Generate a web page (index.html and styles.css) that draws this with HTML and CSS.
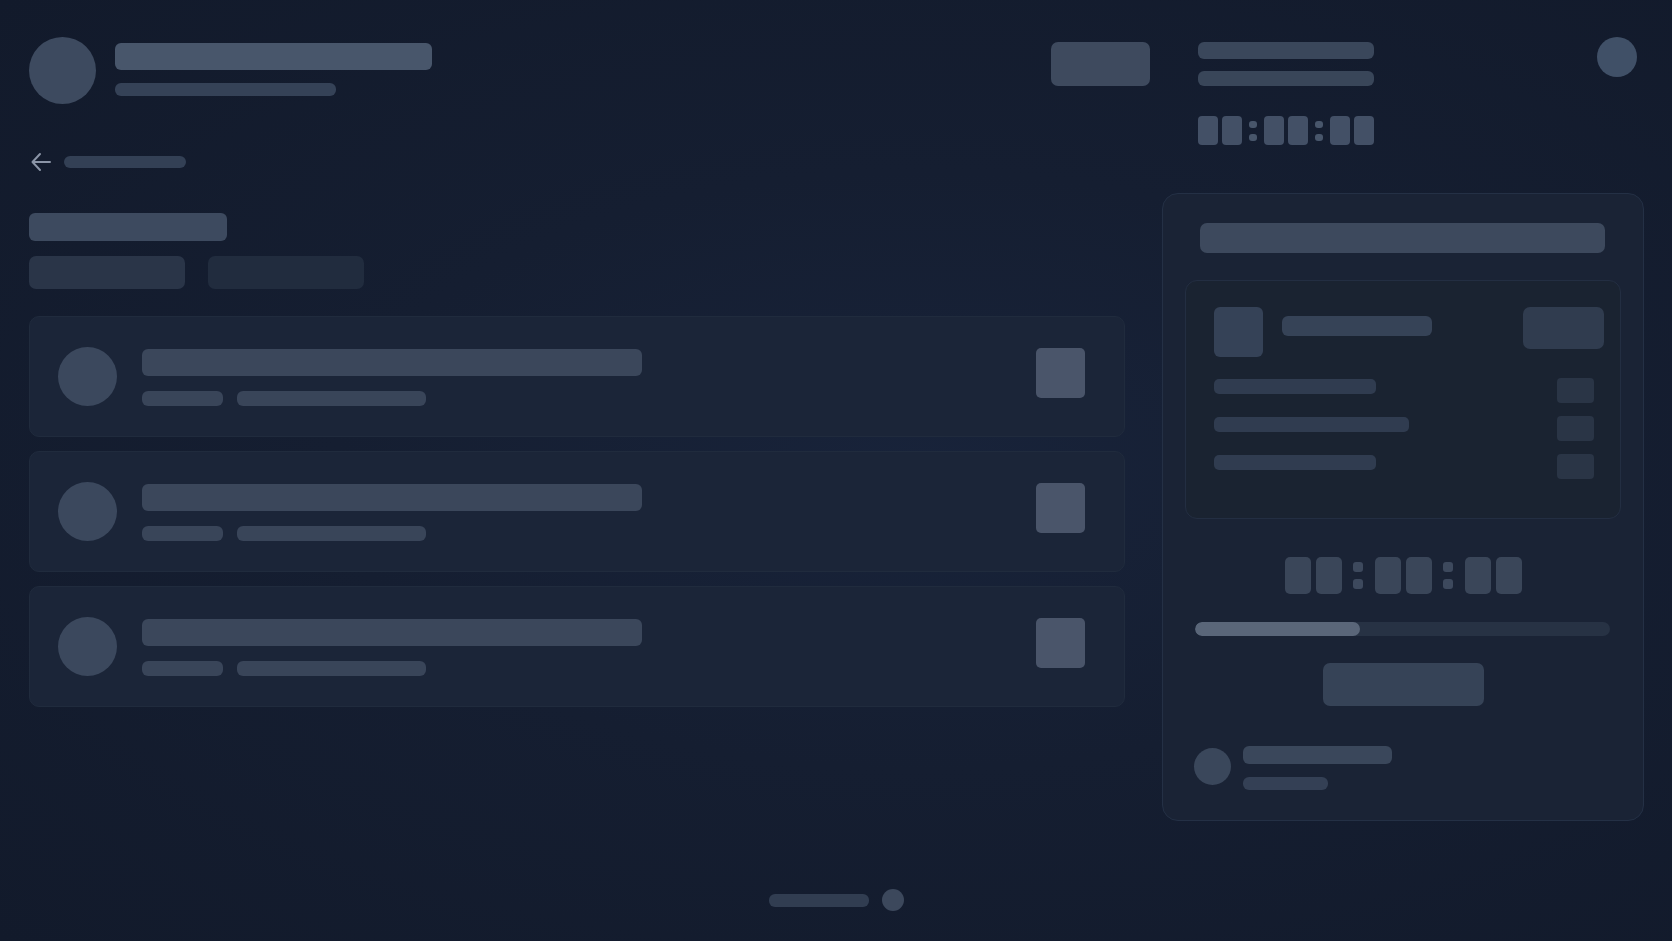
FILE: index.html
```html
<!DOCTYPE html>
<html lang="en">
<head>
    <meta charset="UTF-8">
    <meta name="viewport" content="width=device-width, initial-scale=1.0">
    <title>Loading</title>
    <link rel="stylesheet" href="styles.css">
</head>
<body>
    <!-- Header -->
    <header class="header">
        <div class="profile">
            <div class="avatar"></div>
            <div class="profile-text">
                <div class="sk title-bar"></div>
                <div class="sk sub-bar"></div>
            </div>
        </div>
        <div class="sk header-btn"></div>
        <div class="header-meta">
            <div class="sk meta-bar-1"></div>
            <div class="sk meta-bar-2"></div>
            <div class="timer timer-small">
                <span class="digit"></span><span class="digit"></span>
                <span class="colon"><i></i><i></i></span>
                <span class="digit"></span><span class="digit"></span>
                <span class="colon"><i></i><i></i></span>
                <span class="digit"></span><span class="digit"></span>
            </div>
        </div>
        <div class="header-circle"></div>
    </header>

    <div class="content">
        <!-- Left column -->
        <main class="main">
            <div class="back-row">
                <svg class="back-icon" width="22" height="20" viewBox="0 0 22 20" fill="none">
                    <path d="M20 10H3 M10 2L2.5 10L10 18" stroke="#8b95a7" stroke-width="2" stroke-linecap="round" stroke-linejoin="round"/>
                </svg>
                <div class="sk back-bar"></div>
            </div>
            <div class="sk heading-bar"></div>
            <div class="tabs">
                <div class="sk tab tab-active"></div>
                <div class="sk tab"></div>
            </div>

            <div class="list">
                <div class="item">
                    <div class="item-avatar"></div>
                    <div class="item-text">
                        <div class="sk item-title"></div>
                        <div class="item-tags">
                            <div class="sk tag-short"></div>
                            <div class="sk tag-long"></div>
                        </div>
                    </div>
                    <div class="sk item-action"></div>
                </div>
                <div class="item">
                    <div class="item-avatar"></div>
                    <div class="item-text">
                        <div class="sk item-title"></div>
                        <div class="item-tags">
                            <div class="sk tag-short"></div>
                            <div class="sk tag-long"></div>
                        </div>
                    </div>
                    <div class="sk item-action"></div>
                </div>
                <div class="item">
                    <div class="item-avatar"></div>
                    <div class="item-text">
                        <div class="sk item-title"></div>
                        <div class="item-tags">
                            <div class="sk tag-short"></div>
                            <div class="sk tag-long"></div>
                        </div>
                    </div>
                    <div class="sk item-action"></div>
                </div>
            </div>
        </main>

        <!-- Right panel -->
        <aside class="panel">
            <div class="sk panel-title"></div>
            <div class="summary">
                <div class="summary-head">
                    <div class="sk summary-thumb"></div>
                    <div class="sk summary-name"></div>
                    <div class="sk summary-btn"></div>
                </div>
                <div class="summary-row">
                    <div class="sk row-bar"></div>
                    <div class="sk row-val"></div>
                </div>
                <div class="summary-row">
                    <div class="sk row-bar row-bar-wide"></div>
                    <div class="sk row-val"></div>
                </div>
                <div class="summary-row">
                    <div class="sk row-bar"></div>
                    <div class="sk row-val"></div>
                </div>
            </div>

            <div class="timer timer-large">
                <span class="digit"></span><span class="digit"></span>
                <span class="colon"><i></i><i></i></span>
                <span class="digit"></span><span class="digit"></span>
                <span class="colon"><i></i><i></i></span>
                <span class="digit"></span><span class="digit"></span>
            </div>

            <div class="progress">
                <div class="progress-fill" style="width: 39.7%;"></div>
            </div>

            <div class="sk panel-btn"></div>

            <div class="panel-user">
                <div class="user-avatar"></div>
                <div class="user-text">
                    <div class="sk user-name"></div>
                    <div class="sk user-sub"></div>
                </div>
            </div>
        </aside>
    </div>

    <footer class="pager">
        <div class="sk pager-bar"></div>
        <div class="pager-dot"></div>
    </footer>
</body>
</html>
```

FILE: styles.css
```css
html, body {
    margin: 0;
    height: 100%;
}
body {
    background: radial-gradient(ellipse at 55% 50%, #18233a 0%, #151e31 45%, #121a2b 100%);
    font-family: "Liberation Sans", Arial, sans-serif;
    padding: 37px 28px 0 29px;
    box-sizing: border-box;
    overflow: hidden;
}
.sk {
    border-radius: 6px;
}

/* Header */
.header {
    display: flex;
    align-items: flex-start;
    height: 108px;
}
.profile {
    flex: 1;
    display: flex;
    align-items: flex-start;
}
.avatar {
    width: 67px;
    height: 67px;
    border-radius: 50%;
    background: #3d4a5f;
}
.profile-text {
    margin-left: 19px;
    padding-top: 6px;
}
.title-bar {
    width: 317px;
    height: 27px;
    background: #48566b;
}
.sub-bar {
    width: 221px;
    height: 13px;
    margin-top: 13px;
    background: #354257;
}
.header-btn {
    width: 99px;
    height: 44px;
    margin-top: 5px;
    margin-right: 48px;
    border-radius: 7px;
    background: #3e4a5e;
}
.header-meta {
    width: 176px;
    padding-top: 5px;
}
.meta-bar-1 {
    height: 17px;
    background: #3a475b;
}
.meta-bar-2 {
    height: 15px;
    margin-top: 12px;
    background: #394659;
}
.header-circle {
    width: 40px;
    height: 40px;
    border-radius: 50%;
    margin-left: 223px;
    margin-right: 7px;
    background: #405067;
}

/* Timers */
.timer {
    display: flex;
    align-items: center;
}
.timer .digit {
    border-radius: 4px;
}
.timer .colon {
    display: flex;
    flex-direction: column;
    justify-content: center;
}
.timer .colon i {
    display: block;
    border-radius: 3px;
}
.timer-small {
    margin-top: 30px;
    height: 29px;
}
.timer-small .digit {
    width: 20px;
    height: 29px;
    background: #435066;
}
.timer-small .digit + .digit {
    margin-left: 4px;
}
.timer-small .colon {
    margin: 0 7px;
    gap: 6px;
}
.timer-small .colon i {
    width: 8px;
    height: 7px;
    background: #48566b;
}

.timer-large {
    justify-content: center;
    margin-top: 38px;
    height: 37px;
}
.timer-large .digit {
    width: 26px;
    height: 37px;
    border-radius: 5px;
    background: #3a4659;
}
.timer-large .digit + .digit {
    margin-left: 5px;
}
.timer-large .colon {
    margin: 0 12px 0 11px;
    gap: 7px;
}
.timer-large .colon i {
    width: 10px;
    height: 10px;
    background: #3d495d;
}

/* Content */
.content {
    display: flex;
    align-items: flex-start;
    gap: 37px;
}
.main {
    flex: 1;
}
.back-row {
    display: flex;
    align-items: center;
    margin-top: 7px;
    height: 20px;
}
.back-icon {
    display: block;
    margin-left: 1px;
}
.back-bar {
    width: 122px;
    height: 12px;
    margin-left: 12px;
    background: #334055;
}
.heading-bar {
    width: 198px;
    height: 28px;
    margin-top: 41px;
    background: #3d4a5f;
}
.tabs {
    display: flex;
    gap: 23px;
    margin-top: 15px;
}
.tab {
    width: 156px;
    height: 33px;
    border-radius: 7px;
    background: #212c3e;
}
.tab-active {
    background: #2a3548;
}

.list {
    display: flex;
    flex-direction: column;
    gap: 14px;
    margin-top: 27px;
}
.item {
    display: flex;
    align-items: center;
    height: 121px;
    box-sizing: border-box;
    padding: 0 39px 0 28px;
    border: 1px solid #202b3d;
    border-radius: 10px;
    background: #1b2538;
}
.item-avatar {
    width: 59px;
    height: 59px;
    border-radius: 50%;
    background: #3b485d;
}
.item-text {
    flex: 1;
    margin-left: 25px;
    margin-top: 2px;
}
.item-title {
    width: 500px;
    height: 27px;
    background: #3b475b;
}
.item-tags {
    display: flex;
    gap: 14px;
    margin-top: 15px;
}
.tag-short,
.tag-long {
    height: 15px;
    background: #394559;
}
.tag-short {
    width: 81px;
}
.tag-long {
    width: 189px;
}
.item-action {
    width: 49px;
    height: 50px;
    margin-bottom: 8px;
    border-radius: 5px;
    background: #4a556a;
}

/* Right panel */
.panel {
    width: 482px;
    margin-top: 48px;
    box-sizing: border-box;
    padding: 29px 22px 30px 22px;
    border: 1px solid #243045;
    border-radius: 16px;
    background: #1a2335;
}
.panel-title {
    height: 30px;
    margin: 0 16px 0 15px;
    border-radius: 7px;
    background: #3d495d;
}
.summary {
    margin-top: 27px;
    padding: 26px 16px 39px 28px;
    border: 1px solid #232e42;
    border-radius: 12px;
    background: #1a2331;
}
.summary-head {
    display: flex;
    align-items: flex-start;
}
.summary-thumb {
    width: 49px;
    height: 50px;
    border-radius: 6px;
    background: #354257;
}
.summary-name {
    width: 150px;
    height: 20px;
    margin: 9px 0 0 19px;
    background: #364357;
}
.summary-btn {
    width: 81px;
    height: 42px;
    margin-left: auto;
    border-radius: 7px;
    background: #303c4f;
}
.summary-row {
    display: flex;
    align-items: flex-start;
    justify-content: space-between;
    margin-right: 10px;
    margin-top: 13px;
}
.summary-head + .summary-row {
    margin-top: 21px;
}
.row-bar {
    width: 162px;
    height: 15px;
    margin-top: 1px;
    border-radius: 5px;
    background: #303c50;
}
.row-bar-wide {
    width: 195px;
}
.row-val {
    width: 37px;
    height: 25px;
    border-radius: 4px;
    background: #2a3546;
}

.progress {
    height: 14px;
    margin: 28px 11px 0 10px;
    border-radius: 7px;
    background: #273244;
    overflow: hidden;
}
.progress-fill {
    height: 100%;
    border-radius: 7px;
    background: #5a6679;
}
.panel-btn {
    width: 161px;
    height: 43px;
    margin: 27px auto 0;
    border-radius: 7px;
    background: #364357;
}

.panel-user {
    display: flex;
    align-items: flex-start;
    margin: 40px 0 0 9px;
}
.user-avatar {
    width: 37px;
    height: 37px;
    margin-top: 2px;
    border-radius: 50%;
    background: #3a475b;
}
.user-text {
    margin-left: 12px;
}
.user-name {
    width: 149px;
    height: 18px;
    background: #3a475b;
}
.user-sub {
    width: 85px;
    height: 13px;
    margin-top: 13px;
    background: #344055;
}

/* Footer pager */
.pager {
    display: flex;
    align-items: center;
    justify-content: center;
    gap: 13px;
    margin-top: 68px;
    height: 22px;
}
.pager-bar {
    width: 100px;
    height: 13px;
    background: #313d51;
}
.pager-dot {
    width: 22px;
    height: 22px;
    border-radius: 50%;
    background: #3c485c;
}
```
